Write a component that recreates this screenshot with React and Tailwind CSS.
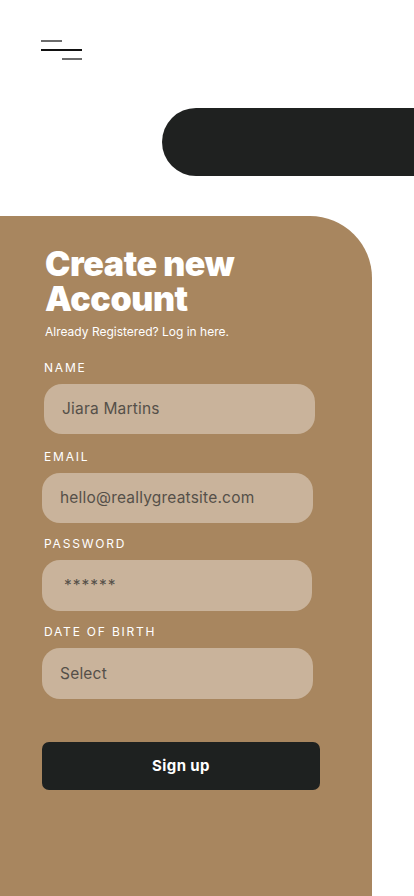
export default function App() {
  const fields = [
    { label: 'NAME', value: 'Jiara Martins', shift: 'ml-[2px] w-[271px] h-[50px]', gap: 'mt-[21px]' },
    { label: 'EMAIL', value: 'hello@reallygreatsite.com', shift: 'w-[271px] h-[50px]', gap: 'mt-[15px]' },
    { label: 'PASSWORD', value: '******', shift: 'w-[270px] h-[51px]', gap: 'mt-[13px]', pw: true },
    { label: 'DATE OF BIRTH', value: 'Select', shift: 'w-[271px] h-[51px]', gap: 'mt-[13px]' },
  ];

  return (
    <div className="min-h-[896px] w-[414px] overflow-hidden bg-white font-['Inter',sans-serif]">
      <div className="pt-[40px] pl-[41px]">
        <div className="flex w-[41px] flex-col gap-[7px]">
          <span className="h-[2px] w-[21px] bg-[#6b6b6b]" />
          <span className="h-[2px] w-[41px] bg-[#111]" />
          <span className="ml-[21px] h-[2px] w-[20px] bg-[#6b6b6b]" />
        </div>
      </div>

      <div className="mt-[48px] ml-[162px] h-[68px] rounded-l-[34px] bg-[#1f2120]" />

      <div className="mt-[40px] min-h-[680px] w-[372px] rounded-tr-[62px] bg-[#a8865f] pl-[42px] pt-[30px] pb-[106px]">
        <h1 className="ml-[3px] text-[34px] font-black leading-[35px] tracking-[-0.4px] text-white">
          Create new
          <br />
          Account
        </h1>
        <p className="ml-[3px] mt-[9px] text-[12px] leading-[14px] text-white">Already Registered? Log in here.</p>

        {fields.map((f) => (
          <div key={f.label} className={f.gap}>
            <div className="ml-[2px] text-[12px] leading-[16px] tracking-[1.8px] text-white">{f.label}</div>
            <div
              className={`mt-[8px] flex items-center rounded-[18px] bg-[#c9b39b] text-[15.5px] tracking-[0.2px] text-[#555049] ${f.shift} ${f.pw ? 'pl-[22px] tracking-[1px]' : 'pl-[18px]'}`}
            >
              {f.value}
            </div>
          </div>
        ))}

        <button
          type="button"
          className="mt-[43px] flex h-[48px] w-[278px] items-center justify-center rounded-[7px] bg-[#1e2120] text-[15px] font-bold tracking-[0.4px] text-white"
        >
          Sign up
        </button>
      </div>
    </div>
  );
}
